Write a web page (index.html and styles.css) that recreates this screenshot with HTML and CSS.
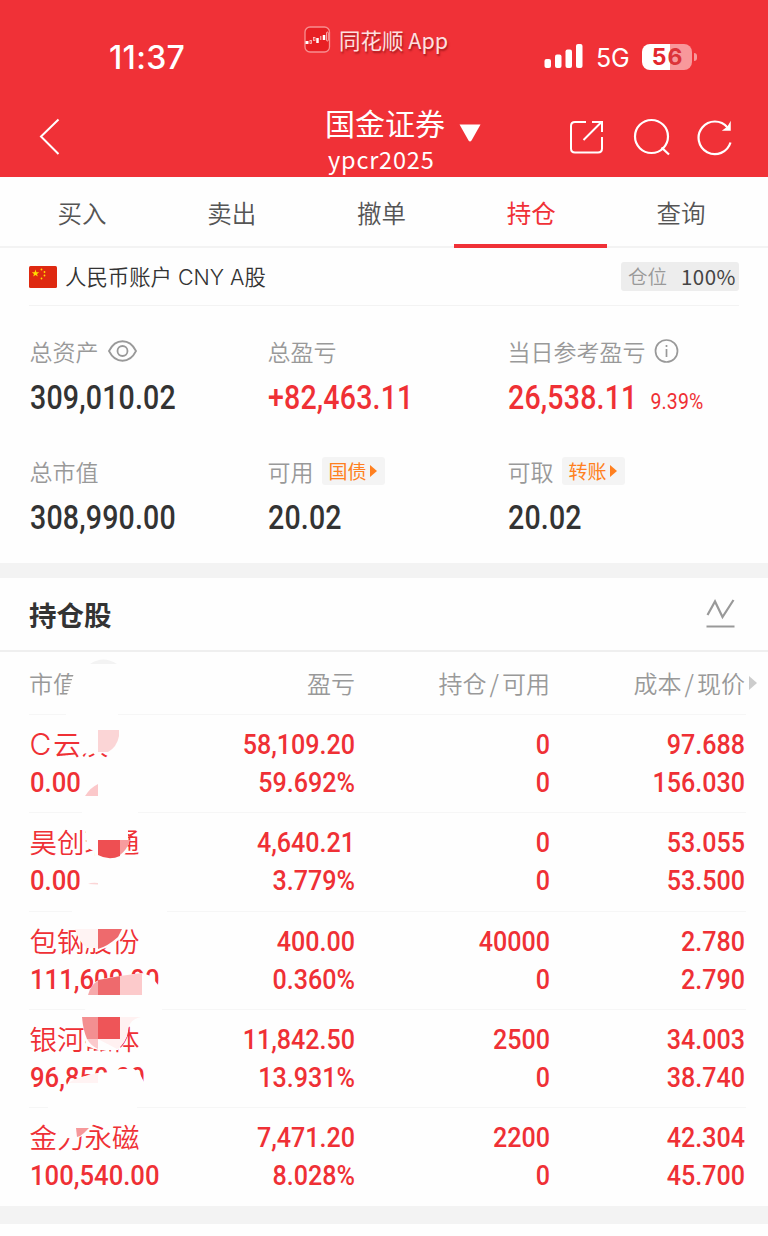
FILE: index.html
```html
<!DOCTYPE html>
<html lang="zh-CN">
<head>
    <meta charset="UTF-8">
    <meta name="viewport" content="width=device-width, initial-scale=1.0">
    <title>持仓</title>
    <link rel="stylesheet" href="styles.css">
</head>
<body>
    <header>
        <div class="status-bar">
            <span class="time">11:37</span>
            <div class="app-mark">
                <svg width="28" height="28" viewBox="0 0 28 28" fill="none">
                    <rect x="1" y="1" width="24.500" height="25" rx="5" fill="#e81f24" stroke="#f78f90" stroke-width="1.300"/>
                    <rect x="1.500" y="15" width="3" height="3" fill="#fff"/>
                    <rect x="6" y="14.500" width="1.500" height="3" stroke="#fbc9c9" stroke-width="0.800"/>
                    <rect x="9.500" y="11.500" width="1.500" height="3" stroke="#fbc9c9" stroke-width="0.800"/>
                    <path d="M13.500 12v5M20 9v5" stroke="#fff" stroke-width="2.500"/>
                    <path d="M16.800 10v4" stroke="#fbc9c9"/>
                    <rect x="22.500" y="6" width="1.800" height="9" rx="1" stroke="#fbc9c9" stroke-width="0.800"/>
                </svg>
                <span>同花顺 App</span>
            </div>
            <div class="signal">
                <svg width="39" height="26" viewBox="0 0 39 26" fill="#fff">
                    <rect x="0.500" y="15" width="6.500" height="9" rx="2"/>
                    <rect x="11" y="10.500" width="6.500" height="13.500" rx="2"/>
                    <rect x="21.500" y="5.500" width="6.500" height="18.500" rx="2"/>
                    <rect x="32" y="0" width="6.500" height="24" rx="2"/>
                </svg>
                <span class="network">5G</span>
                <div class="battery"><b><i>5</i>6</b></div>
            </div>
        </div>
        <div class="nav-bar">
            <svg class="back" width="24" height="38" viewBox="0 0 24 38" fill="none" stroke="#fff" stroke-width="2">
                <path d="M20.500 1.500L3 18.500L20.500 36"/>
            </svg>
            <div class="account">
                <h1>国金证券</h1>
                <p>ypcr2025</p>
                <svg class="caret" width="22" height="18" viewBox="0 0 22 18"><path d="M0.500 0.500H21.500L12.500 16.500Q11 18.500 9.500 16.500Z" fill="#fff"/></svg>
            </div>
            <div class="nav-icons">
                <svg width="36" height="36" viewBox="0 0 36 36" fill="none" stroke="#fff" stroke-width="2">
                    <path d="M17 3H6Q2 3 2 7V29.500Q2 33.500 6 33.500H29Q33 33.500 33 29.500V18M14.500 21L32 3.500M23 3H33V13"/>
                </svg>
                <svg width="38" height="38" viewBox="0 0 38 38" fill="none" stroke="#fff" stroke-width="2.200">
                    <circle cx="19.500" cy="18.500" r="16.500"/>
                    <path d="M29.500 29.500L37 36.500"/>
                </svg>
                <svg width="36" height="38" viewBox="0 0 36 38" fill="none" stroke="#fff" stroke-width="2.200">
                    <path d="M33.500 24.500A16.300 16.300 0 1 1 30.500 9.500"/>
                    <path d="M33 5.500V12H27L31 9Z" fill="#fff" stroke-width="1.500"/>
                </svg>
            </div>
        </div>
    </header>

    <nav class="tabs">
        <a>买入</a>
        <a>卖出</a>
        <a>撤单</a>
        <a class="active">持仓</a>
        <a>查询</a>
    </nav>

    <section class="summary">
        <div class="currency">
            <svg width="28" height="22" viewBox="0 0 28 22">
                <rect width="28" height="22" rx="1.500" fill="#de2910"/>
                <g fill="#ffde00">
                    <path d="M6.500 3.500L7.400 6.200H10.200L8 7.900L8.800 10.500L6.500 8.900L4.200 10.500L5 7.900L2.800 6.200H5.600Z"/>
                    <circle cx="12.500" cy="3.500" r="0.900"/>
                    <circle cx="15.500" cy="6" r="0.900"/>
                    <circle cx="15.500" cy="9.500" r="0.900"/>
                    <circle cx="12.500" cy="12.500" r="0.900"/>
                </g>
            </svg>
            <span>人民币账户 CNY A股</span>
            <div class="position">仓位 <b>100%</b></div>
        </div>
        <div class="figures">
            <div class="figure">
                <div class="label"><span>总资产</span>
                    <svg width="30" height="24" viewBox="0 0 30 24" fill="none" stroke="#999" stroke-width="1.800">
                        <path d="M2 12C8.500 -1 22.500 -1 29 12C22.500 25 8.500 25 2 12Z"/>
                        <circle cx="15.500" cy="12" r="5"/>
                    </svg>
                </div>
                <div class="value">309,010.02</div>
            </div>
            <div class="figure">
                <div class="label"><span>总盈亏</span></div>
                <div class="value red">+82,463.11</div>
            </div>
            <div class="figure">
                <div class="label"><span>当日参考盈亏</span>
                    <svg width="26" height="26" viewBox="0 0 26 26" fill="none" stroke="#999" stroke-width="1.700">
                        <circle cx="12.500" cy="13" r="11"/>
                        <path d="M12.500 11V19M12.500 7V9"/>
                    </svg>
                </div>
                <div class="value red">26,538.11<small>9.39%</small></div>
            </div>
            <div class="figure">
                <div class="label"><span>总市值</span></div>
                <div class="value">308,990.00</div>
            </div>
            <div class="figure">
                <div class="label"><span>可用</span><div class="tag"><span>国债</span></div></div>
                <div class="value">20.02</div>
            </div>
            <div class="figure">
                <div class="label"><span>可取</span><div class="tag"><span>转账</span></div></div>
                <div class="value">20.02</div>
            </div>
        </div>
    </section>

    <section class="holdings">
        <div class="title">
            <h2>持仓股</h2>
            <svg width="30" height="32" viewBox="0 0 30 32" fill="none" stroke="#999" stroke-width="2.200">
                <path d="M2.500 17L10 3.500L17.500 19L28.500 2M1.500 28.500H29.500"/>
            </svg>
        </div>
        <div class="table">
            <div class="row head">
                <span>市值</span><span>盈亏</span><span>持仓<em>/</em>可用</span><span class="last">成本<em>/</em>现价</span>
            </div>
            <div class="row">
                <div><p class="name"><span class="prefix">C</span>云汉</p><p>0.00</p></div>
                <div><p>58,109.20</p><p>59.692%</p></div>
                <div><p>0</p><p>0</p></div>
                <div><p>97.688</p><p>156.030</p></div>
            </div>
            <div class="row">
                <div><p class="name">昊创瑞通</p><p>0.00</p></div>
                <div><p>4,640.21</p><p>3.779%</p></div>
                <div><p>0</p><p>0</p></div>
                <div><p>53.055</p><p>53.500</p></div>
            </div>
            <div class="row">
                <div><p class="name">包钢股份</p><p>111,600.00</p></div>
                <div><p>400.00</p><p>0.360%</p></div>
                <div><p>40000</p><p>0</p></div>
                <div><p>2.780</p><p>2.790</p></div>
            </div>
            <div class="row">
                <div><p class="name">银河磁体</p><p>96,850.00</p></div>
                <div><p>11,842.50</p><p>13.931%</p></div>
                <div><p>2500</p><p>0</p></div>
                <div><p>34.003</p><p>38.740</p></div>
            </div>
            <div class="row">
                <div><p class="name">金力永磁</p><p>100,540.00</p></div>
                <div><p>7,471.20</p><p>8.028%</p></div>
                <div><p>2200</p><p>0</p></div>
                <div><p>42.304</p><p>45.700</p></div>
            </div>

            <!-- brush marks over the names -->
            <svg class="brush" width="200" height="554" viewBox="0 652 200 554">
                <g fill="#fefefe">
                    <path d="M77 664H118V722H66V698Z"/>
                    <path d="M79 728L120 728V748L111 754L103 753L96 756L92 752L83 754Z"/>
                    <path d="M82 806H138V820H82Z"/>
                    <path d="M85 828H128V840L127 852L118 860H96L94 851L87 848Z"/>
                    <path d="M72 905H167V916H72Z"/>
                    <path d="M76 929L98 922H121V938L111 946L100 950L96 946L88 947L80 938Z"/>
                    <path d="M88 997L94 983L100 979L120 976L142 973L151 976L162 990V1014H84Z"/>
                    <path d="M82 1014H130L127 1036L118 1050H98L86 1046Z"/>
                    <path d="M62 1094L69 1081L82 1077L98 1073L112 1072L120 1069H134L140 1074L146 1086V1094Z"/>
                    <path d="M48 1102H137V1114H48Z"/>
                    <path d="M59 1124H87L85 1132L82 1136L76 1139L70 1138L58 1139Z"/>
                </g>
                <path d="M90 664Q103 655 117 664Z" fill="#f3f3f3"/>
                <path d="M98 730H119V736Q117 747 108 752H98Z" fill="#fbd5d6"/>
                <path d="M85 796Q91 787 98 784V796Z" fill="#fbc8ca"/>
                <path d="M98 840H120V856Q109 861 98 855Z" fill="#ee4f52"/>
                <path d="M120 840H130Q127 850 120 855Z" fill="#f79c9e"/>
                <path d="M88 884Q92 882 98 883V884.500Z" fill="#fbd5d6"/>
                <path d="M75 929H98V948H87Q78 941 75 929Z" fill="#fff3f3"/>
                <path d="M98 929H122L118 937Q108 946 98 949Z" fill="#ee6a6d"/>
                <path d="M88 995Q91 984 98 981V995Z" fill="#f6a9ab"/>
                <path d="M98 980L120 976V995H98Z" fill="#ee6a6d"/>
                <path d="M120 976L142 973V995H120Z" fill="#fccacb"/>
                <path d="M120 1017H141Q129 1019 128 1031Q126 1044 117 1049L98 1039H120Z" fill="#fff1f1"/>
                <path d="M82 1017H98V1039H87Q83 1030 82 1017Z" fill="#f38f91"/>
                <path d="M98 1017H120V1039H98Z" fill="#ee5558"/>
                <path d="M87 1039H98V1049Q91 1046 87 1039Z" fill="#fbcacc"/>
                <path d="M68 1083Q77 1077 98 1073V1083Z" fill="#fff3f3"/>
                <path d="M76 1128H89L84 1133Q81 1136 77 1137Z" fill="#f6989a"/>
            </svg>
        </div>
    </section>
</body>
</html>
```
FILE: styles.css
```css
* {
    box-sizing: border-box;
}
body {
    margin: 0;
    width: 768px;
    height: 1236px;
    overflow: hidden;
    background-color: #fefefe;
    color: #333;
    font-family: 'Noto Sans CJK SC', sans-serif;
    font-weight: 350;
}
h1, h2, p {
    margin: 0;
}
svg {
    display: block;
    flex: none;
}
header {
    height: 177px;
    background-color: #f03137;
    color: #fff;
}
.status-bar {
    height: 96px;
    display: grid;
    grid-template-columns: 304px 240px 1fr;
}
.time {
    padding: 38px 0 0 109px;
    font: 500 32px/40px Inter, sans-serif;
    letter-spacing: 0.3px;
}
.app-mark {
    display: flex;
    height: 28px;
    margin-top: 26px;
    gap: 7px;
    align-items: center;
    font-size: 21.5px;
    font-weight: 400;
    line-height: 28px;
    white-space: nowrap;
    color: #fde0e0;
    text-shadow: 1px 2px 2px rgba(90, 0, 0, 0.5);
}
.app-mark span {
    margin-top: -1px;
}
.signal {
    display: flex;
    align-items: center;
    height: 28px;
    margin-top: 43px;
}
.network {
    margin: 2px 0 0 13px;
    width: 46px;
    font: 400 25px/26px Inter, sans-serif;
    letter-spacing: -0.3px;
}
.battery {
    position: relative;
    width: 50px;
    height: 26px;
    border-radius: 8px;
    background: linear-gradient(to right, #fff 56%, #f8989b 56%);
    text-align: center;
    font: 700 23px/27px Inter, sans-serif;
    color: #dc3338;
}
.battery i {
    font-style: normal;
    color: #e3272d;
    letter-spacing: 1px;
}
.battery b {
    font-weight: 700;
}
.battery::after {
    content: "";
    position: absolute;
    right: -5px;
    top: 9px;
    width: 3px;
    height: 8px;
    border-radius: 0 3px 3px 0;
    background-color: #f8989b;
}
.nav-bar {
    height: 81px;
    display: grid;
    grid-template-columns: 325px 244px 1fr;
}
.back {
    margin: 22px 0 0 38px;
}
.account {
    position: relative;
}
.account h1 {
    margin-top: 7px;
    font-size: 30px;
    line-height: 38px;
    font-weight: 400;
}
.account p {
    margin: 5px 0 0 3px;
    width: 108px;
    font-size: 23.5px;
    line-height: 27px;
    font-weight: 400;
    letter-spacing: 0.8px;
}
.caret {
    position: absolute;
    left: 134px;
    top: 28px;
}
.nav-icons {
    display: flex;
    height: 38px;
    margin-top: 22px;
    gap: 27px;
    align-items: center;
}
.tabs {
    display: grid;
    grid-template-columns: repeat(5, 149.8px);
    height: 71px;
    padding-left: 7px;
    border-bottom: 2px solid #f3f3f3;
}
.tabs a {
    position: relative;
    height: 69px;
    text-align: center;
    font-size: 24.5px;
    line-height: 71px;
    color: #555;
}
.tabs .active {
    color: #f03137;
    font-weight: 400;
}
.tabs .active::after {
    content: "";
    position: absolute;
    left: -2px;
    bottom: -2px;
    width: 153px;
    height: 4px;
    background-color: #f03137;
}
.summary {
    height: 330px;
    border-bottom: 15px solid #f3f3f3;
}
.currency {
    display: flex;
    align-items: center;
    height: 58px;
    margin: 0 29px;
    border-bottom: 1px solid #f3f3f3;
    font-family: Inter, 'Noto Sans CJK SC', sans-serif;
    font-size: 21.4px;
    line-height: 30px;
    gap: 8px;
}
.position {
    display: flex;
    align-items: center;
    justify-content: space-between;
    width: 118px;
    height: 29px;
    margin-left: auto;
    padding: 0 3px 0 7px;
    border-radius: 3px;
    background-color: #ededed;
    color: #999;
    font-size: 19.5px;
}
.position b {
    font: 400 20.5px/29px 'Noto Sans CJK SC', sans-serif;
    letter-spacing: 0.5px;
    color: #444;
}
.figures {
    display: grid;
    grid-template-columns: 238px 240px 1fr;
    grid-auto-rows: 120px;
    padding: 30px 0 0 30px;
}
.label {
    display: flex;
    align-items: center;
    gap: 8px;
    height: 30px;
    margin-left: -0.5px;
    font-size: 23px;
    line-height: 28px;
    color: #999;
}
.label > span {
    margin-top: -1px;
}
.value {
    display: inline-block;
    margin-top: 12px;
    font: 500 33px/40px Roboto, sans-serif;
    letter-spacing: 0.2px;
    white-space: nowrap;
    transform: scaleX(0.865);
    transform-origin: left;
}
.value small {
    margin-left: 15px;
    font-size: 22.5px;
    font-weight: 400;
}
.red {
    color: #ef3035;
}
.tag {
    display: flex;
    align-items: center;
    height: 28px;
    width: 63px;
    padding-left: 7px;
    border-radius: 3px;
    background-color: #f4f4f4;
    color: #ff8020;
    font-size: 19px;
    font-weight: 400;
    gap: 3px;
}
.tag::after {
    content: "";
    border-left: 7px solid #ff8020;
    border-top: 6px solid transparent;
    border-bottom: 6px solid transparent;
}
.title {
    display: flex;
    justify-content: space-between;
    align-items: center;
    height: 74px;
    padding: 0 33px 0 29px;
    border-bottom: 2px solid #efefef;
}
.title h2 {
    font-size: 27.5px;
    font-weight: 700;
    line-height: 40px;
}
.table {
    position: relative;
    border-bottom: 18px solid #f3f3f3;
}
.row {
    display: grid;
    grid-template-columns: 150px 176px 195px 195px;
    height: 98.3px;
    margin: 0 22px 0 29px;
    padding-top: 11px;
    border-bottom: 1px solid #f6f6f6;
    text-align: right;
    color: #ef3035;
    font: 500 28.5px/38px Roboto, sans-serif;
}
.row p {
    transform: scaleX(0.88);
    transform-origin: right;
    white-space: nowrap;
}
.row > :first-child {
    text-align: left;
}
.row > :first-child p {
    margin-left: 1px;
    transform: scaleX(0.9);
    transform-origin: left;
}
.row > :first-child .name {
    height: 38px;
    margin-left: 0.5px;
    font: 350 27.5px/39px Inter, 'Noto Sans CJK SC', sans-serif;
    transform: none;
}
.name .prefix {
    margin-right: 2px;
    font-size: 30px;
    line-height: 30px;
}
.row:last-of-type {
    border-bottom: 0;
}
.row.head {
    height: 63px;
    padding-top: 0;
    font: 350 24px/61px 'Noto Sans CJK SC', sans-serif;
    color: #999;
}
.head em {
    padding: 0 3px;
    font-style: normal;
}
.last {
    position: relative;
}
.last::after {
    content: "";
    position: absolute;
    right: -12px;
    top: 24px;
    border-left: 8px solid #ccc;
    border-top: 7px solid transparent;
    border-bottom: 7px solid transparent;
}
.brush {
    position: absolute;
    left: 0;
    top: 0;
}
```
